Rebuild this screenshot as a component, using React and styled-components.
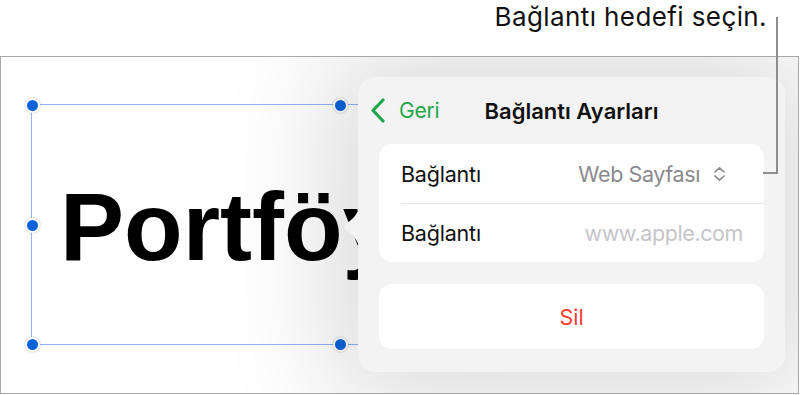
import React from "react";
import styled, { createGlobalStyle } from "styled-components";

const GlobalStyle = createGlobalStyle`
  html, body {
    margin: 0;
    padding: 0;
    background: #fff;
  }
  body {
    font-family: Inter, Roboto, "Noto Sans", sans-serif;
    width: 804px;
    height: 395px;
    overflow: hidden;
    -webkit-font-smoothing: antialiased;
  }
`;

const Page = styled.div`
  position: relative;
  width: 804px;
  height: 395px;
`;

const Callout = styled.div`
  height: 56px;
  box-sizing: border-box;
  display: flex;
  justify-content: flex-end;
  padding: 2px 37px 0 0;
  font-size: 26px;
  line-height: 30px;
  letter-spacing: 0.4px;
  color: #111;
`;

const Leader = styled.div`
  position: absolute;
  left: 763px;
  top: 17px;
  width: 13px;
  height: 155px;
  border-right: 2px solid #8d8d8d;
  border-bottom: 2px solid #8d8d8d;
  z-index: 5;
`;

const Frame = styled.div`
  position: relative;
  width: 799px;
  height: 338px;
  box-sizing: border-box;
  border: 1px solid #a9a9a9;
  overflow: hidden;
  background: #fff;
  padding: 47px 0 0 30px;
`;

const Selection = styled.div`
  position: relative;
  width: 618px;
  height: 241px;
  box-sizing: border-box;
  border: 1px solid #90b6f6;
  display: flex;
  align-items: center;
  padding: 4px 0 0 28px;
`;

const SlideText = styled.div`
  font-family: "Liberation Sans", Arial, sans-serif;
  font-weight: 700;
  font-size: 96px;
  line-height: 1;
  color: #000;
`;

const Handle = styled.span`
  position: absolute;
  left: ${(p) => p.x}%;
  top: ${(p) => p.y}%;
  width: 11px;
  height: 11px;
  margin: -7px 0 0 -7px;
  border-radius: 50%;
  background: #0b63dc;
  border: 2px solid #fff;
  box-shadow: 0 0 2px rgba(0, 0, 0, 0.3);
`;

const Popover = styled.div`
  position: absolute;
  left: 357px;
  top: 20px;
  width: 427px;
  background: #f3f3f3;
  border-radius: 17px;
  box-shadow: 0 0 110px 30px rgba(0, 0, 0, 0.14);
  padding-bottom: 23px;
`;

const Arrow = styled.svg`
  position: absolute;
  left: -15px;
  top: 128px;
`;

const Header = styled.div`
  height: 67px;
  display: grid;
  grid-template-columns: 1fr auto 1fr;
  align-items: center;
  padding: 0 12px;
`;

const Back = styled.div`
  display: flex;
  align-items: center;
  gap: 14px;
  color: #1ea64b;
  font-size: 21px;
  letter-spacing: -0.2px;
`;

const Title = styled.div`
  font-size: 22px;
  font-weight: 600;
  color: #111;
`;

const Body = styled.div`
  display: flex;
  flex-direction: column;
  gap: 22px;
  padding: 0 21px;
`;

const Card = styled.div`
  background: #fff;
  border-radius: 13px;
  overflow: hidden;
`;

const Row = styled.div`
  height: 59px;
  display: flex;
  align-items: center;
  justify-content: space-between;
  margin-left: 22px;
  padding-right: 21px;
  font-size: 21.5px;
  letter-spacing: -0.2px;
  color: #111;
  border-top: ${(p) => (p.first ? "none" : "1.5px solid #e6e6e6")};
  box-sizing: border-box;
`;

const Value = styled.div`
  display: flex;
  align-items: center;
  gap: 13px;
  letter-spacing: -0.4px;
  color: ${(p) => (p.placeholder ? "#c5c5c8" : "#8a8a8e")};

  & > svg {
    margin-right: 17px;
  }
`;

const DeleteButton = styled.div`
  height: 65px;
  border-radius: 13px;
  background: #fff;
  display: flex;
  align-items: center;
  justify-content: center;
  color: #ff3b30;
  font-size: 21.5px;
`;

const handles = [
  [0, 0],
  [50, 0],
  [100, 0],
  [0, 50],
  [100, 50],
  [0, 100],
  [50, 100],
  [100, 100],
];

export default function App() {
  return (
    <Page>
      <GlobalStyle />
      <Callout>Bağlantı hedefi seçin.</Callout>
      <Leader />
      <Frame>
        <Selection>
          <SlideText>Portföy</SlideText>
          {handles.map(([x, y]) => (
            <Handle key={`${x}-${y}`} x={x} y={y} />
          ))}
        </Selection>
        <Popover>
          <Arrow width="16" height="44" viewBox="0 0 16 44">
            <path d="M16 0 C16 8 10 14 3 19 Q0 22 3 25 C10 30 16 36 16 44 Z" fill="#f3f3f3" />
          </Arrow>
          <Header>
            <Back>
              <svg width="15" height="25" viewBox="0 0 15 25">
                <path
                  d="M13 2 L3 12.5 L13 23"
                  fill="none"
                  stroke="#1ea64b"
                  strokeWidth="3.2"
                  strokeLinecap="round"
                  strokeLinejoin="round"
                />
              </svg>
              Geri
            </Back>
            <Title>Bağlantı Ayarları</Title>
            <div />
          </Header>
          <Body>
            <Card>
              <Row first>
                <span>Bağlantı</span>
                <Value>
                  Web Sayfası
                  <svg width="13" height="16" viewBox="0 0 13 16">
                    <path
                      d="M2 6 L6.5 1.8 L11 6 M2 10 L6.5 14.2 L11 10"
                      fill="none"
                      stroke="#8a8a8e"
                      strokeWidth="1.7"
                      strokeLinecap="round"
                      strokeLinejoin="round"
                    />
                  </svg>
                </Value>
              </Row>
              <Row>
                <span>Bağlantı</span>
                <Value placeholder>www.apple.com</Value>
              </Row>
            </Card>
            <DeleteButton>Sil</DeleteButton>
          </Body>
        </Popover>
      </Frame>
    </Page>
  );
}
